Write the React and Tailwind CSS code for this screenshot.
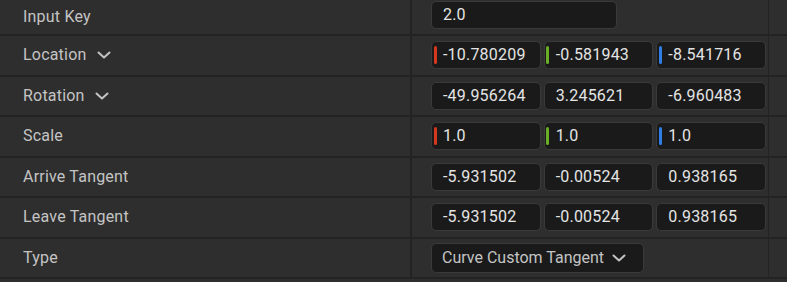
import React from "react";

const Chevron = ({ className }) => (
  <svg className={className} viewBox="0 0 14 8" fill="none" stroke="currentColor" strokeWidth="2" strokeLinecap="round" strokeLinejoin="round">
    <path d="M1.5 1.5 L7 6.5 L12.5 1.5" />
  </svg>
);

const Box = ({ value, bar, className = "flex-1" }) => (
  <div className={`${className} relative h-[28px] rounded-[5px] bg-[#1a1a1a] border border-[#3a3a3a] flex items-center pl-[11px] text-[16px] tracking-[0.2px] text-[#e4e4e4]`}>
    {bar && <div className={`absolute left-[1.5px] top-[4px] w-[3px] h-[18px] rounded-[2px] ${bar}`} />}
    <span className="leading-none">{value}</span>
  </div>
);

const Row = ({ label, chevron, children, first }) => (
  <div className={`flex ${first ? "h-[36px]" : "h-[40.5px]"} border-b-2 border-[#232323]`}>
    <div className="w-[410px] flex items-center pl-[23px] text-[16px] tracking-[0.2px] text-[#c4c4c4]">
      <span>{label}</span>
      {chevron && <Chevron className="w-[14px] h-[8px] ml-[10px] text-[#c4c4c4]" />}
    </div>
    <div className="w-[2px] bg-[#232323]" />
    <div className="w-[356px] flex items-center pl-[19px]">{children}</div>
    <div className="w-[1px] bg-[#232323]" />
    <div className="flex-1" />
  </div>
);

const Triple = ({ vals, colored }) => (
  <div className="flex w-[335px] gap-[3px]">
    <Box value={vals[0]} bar={colored ? "bg-[#d6381e]" : null} />
    <Box value={vals[1]} bar={colored ? "bg-[#6aae26]" : null} />
    <Box value={vals[2]} bar={colored ? "bg-[#2e7ee6]" : null} />
  </div>
);

export default function App() {
  return (
    <div className="w-[787px] h-[282px] overflow-hidden bg-[#2e2e2e]" style={{ fontFamily: "Roboto, 'Noto Sans', sans-serif" }}>
      <Row label="Input Key" first>
        <div className="-mt-[5px] w-[186px] flex">
          <Box value="2.0" className="w-[186px]" />
        </div>
      </Row>
      <Row label="Location" chevron>
        <Triple vals={["-10.780209", "-0.581943", "-8.541716"]} colored />
      </Row>
      <Row label="Rotation" chevron>
        <Triple vals={["-49.956264", "3.245621", "-6.960483"]} />
      </Row>
      <Row label="Scale">
        <Triple vals={["1.0", "1.0", "1.0"]} colored />
      </Row>
      <Row label="Arrive Tangent">
        <Triple vals={["-5.931502", "-0.00524", "0.938165"]} />
      </Row>
      <Row label="Leave Tangent">
        <Triple vals={["-5.931502", "-0.00524", "0.938165"]} />
      </Row>
      <Row label="Type">
        <div className="w-[213px] h-[30px] rounded-[5px] bg-[#1a1a1a] border border-[#3a3a3a] flex items-center pl-[10px] text-[16px] text-[#c4c4c4]">
          <span>Curve Custom Tangent</span>
          <Chevron className="w-[14px] h-[8px] ml-[8px] text-[#c4c4c4]" />
        </div>
      </Row>
    </div>
  );
}
